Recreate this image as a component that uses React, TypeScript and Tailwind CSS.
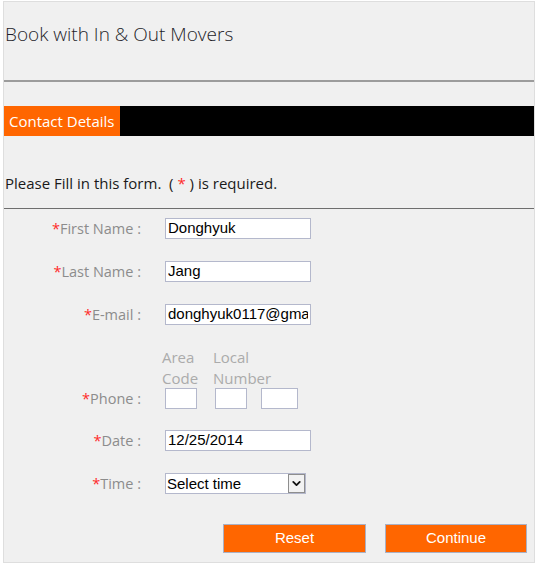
import { ChevronDown } from "lucide-react";

const label = "text-[14.5px] leading-[21px] text-[#8c8c8c]";
const box =
  "block h-[21px] border border-[#b4b8cc] bg-white px-[2px] text-[15px] text-black outline-none [font-family:Arial,'Liberation_Sans',sans-serif]";

function Row({ name, children }: { name: string; children: React.ReactNode }) {
  return (
    <div className="flex h-[21px] items-center">
      <div className={`w-[137px] text-right ${label}`}>
        <span className="text-[#ff2a2a]">*</span>
        {name} :
      </div>
      <div className="ml-[24px] flex">{children}</div>
    </div>
  );
}

export default function App() {
  return (
    <div className="min-h-[565px] bg-white pt-[1px] pl-[3px] [font-family:'Open_Sans',sans-serif]">
      <div className="h-[562px] w-[532px] border border-[#dedede] bg-[#f0f0f0]">
        <div className="h-[78px] pt-[18px] pl-[1px]">
          <h1 className="text-[19px] leading-[28px] font-light text-[#1e1e2a]">
            Book with In &amp; Out Movers
          </h1>
        </div>
        <div className="h-[2px] bg-[#9c9c9c]" />

        <div className="mt-[24px] flex h-[30px] bg-black">
          <div className="flex items-center bg-[#ff6600] pl-[5px] pr-[5px] text-[15px] text-white">
            Contact Details
          </div>
        </div>

        <p className="mt-[37px] pl-[1px] text-[15px] leading-[20px] text-[#1a1a1a]">
          Please Fill in this form.&nbsp; ( <span className="text-[#ff2a2a]">*</span> ) is required.
        </p>
        <div className="mt-[15px] h-px bg-[#6e6e6e]" />

        <form className="mt-[9px] flex flex-col gap-[22px]">
          <Row name="First Name">
            <input className={`${box} w-[146px]`} defaultValue="Donghyuk" />
          </Row>
          <Row name="Last Name">
            <input className={`${box} w-[146px]`} defaultValue="Jang" />
          </Row>
          <Row name="E-mail">
            <input className={`${box} w-[146px]`} defaultValue="donghyuk0117@gmail.com" />
          </Row>

          <div className="flex items-end">
            <div className={`w-[137px] text-right ${label}`}>
              <span className="text-[#ff2a2a]">*</span>Phone :
            </div>
            <div className="ml-[24px] flex">
              <div className="w-[50px]">
                <div className="-ml-[3px] h-[41px] text-[15px] leading-[20.5px] text-[#ababab]">
                  Area
                  <br />
                  Code
                </div>
                <input className={`${box} w-[32px]`} />
              </div>
              <div className="w-[46px]">
                <div className="-ml-[2px] h-[41px] text-[15px] leading-[20.5px] text-[#ababab]">
                  Local
                  <br />
                  Number
                </div>
                <input className={`${box} w-[32px]`} />
              </div>
              <div className="flex flex-col justify-end">
                <input className={`${box} w-[37px]`} />
              </div>
            </div>
          </div>

          <div className="-mt-[1px]">
            <Row name="Date">
              <input className={`${box} w-[146px]`} defaultValue="12/25/2014" />
            </Row>
          </div>
          <Row name="Time">
            <div className="relative h-[21px] w-[141px]">
              <select className="block h-[21px] w-[141px] appearance-none border border-[#b4b8cc] bg-white pl-[1px] text-[15px] leading-[19px] text-black outline-none [font-family:Arial,'Liberation_Sans',sans-serif]">
                <option>Select time</option>
              </select>
              <div className="pointer-events-none absolute right-[1px] top-[1px] flex h-[19px] w-[17px] items-center justify-center border border-[#8e8e8e] bg-[#f2f2f2]">
                <ChevronDown size={13} strokeWidth={3.4} className="text-[#111]" />
              </div>
            </div>
          </Row>

          <div className="mt-[8px] flex justify-end gap-[19px] pr-[7px]">
            <button
              type="button"
              className="h-[29px] w-[143px] border border-[#aab0c4] bg-[#ff6600] text-[15px] text-white [font-family:Arial,'Liberation_Sans',sans-serif]"
            >
              Reset
            </button>
            <button
              type="button"
              className="h-[29px] w-[142px] border border-[#aab0c4] bg-[#ff6600] text-[15px] text-white [font-family:Arial,'Liberation_Sans',sans-serif]"
            >
              Continue
            </button>
          </div>
        </form>
      </div>
    </div>
  );
}
